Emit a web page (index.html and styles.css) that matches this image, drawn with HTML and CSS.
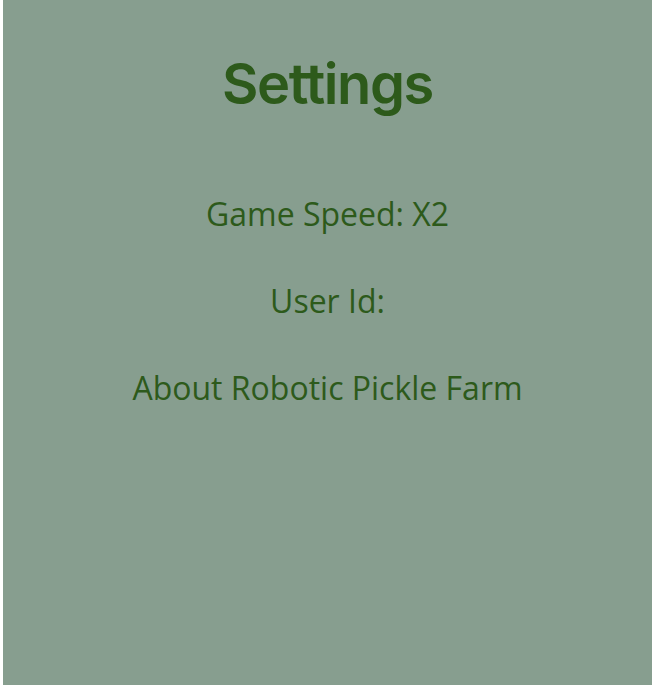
FILE: index.html
```html
<!DOCTYPE html>
<html>
<head>
<meta charset="utf-8">
<link rel="stylesheet" href="styles.css">
</head>
<body>
<main class="screen">
  <h1 class="title">Settings</h1>
  <ul class="options">
    <li class="option">Game Speed: X2</li>
    <li class="option">User Id:</li>
    <li class="option">About Robotic Pickle Farm</li>
  </ul>
</main>
</body>
</html>
```
FILE: styles.css
```css
html, body {
  margin: 0;
  padding: 0;
  background: #ffffff;
}
.screen {
  margin-left: 3px;
  height: 685px;
  background: #879e8f;
  color: #2d5a1b;
  display: flex;
  flex-direction: column;
  align-items: center;
  box-sizing: border-box;
  padding-top: 49px;
}
.title {
  margin: 0;
  font-family: Inter, "Liberation Sans", sans-serif;
  font-weight: 600;
  font-size: 56px;
  line-height: 70px;
  letter-spacing: -1.4px;
}
.options {
  list-style: none;
  margin: 0;
  padding: 0;
  display: flex;
  flex-direction: column;
  align-items: center;
  gap: 47px;
  margin-top: 75px;
}
.option {
  font-family: "Open Sans", sans-serif;
  font-size: 32px;
  line-height: 40px;
}
```
